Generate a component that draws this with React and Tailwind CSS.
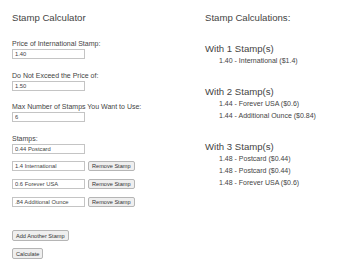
import React from 'react';

const stamps = ['1.4 International', '0.6 Forever USA', '.84 Additional Ounce'];

const results = [
  { count: 1, items: ['1.40 - International ($1.4)'] },
  { count: 2, items: ['1.44 - Forever USA ($0.6)', '1.44 - Additional Ounce ($0.84)'] },
  { count: 3, items: ['1.48 - Postcard ($0.44)', '1.48 - Postcard ($0.44)', '1.48 - Forever USA ($0.6)'] },
];

const inputCls =
  'block w-[73px] h-[10px] border border-[#c4c4c4] bg-white px-[2px] text-[5.8px] leading-[8px] text-[#444] outline-none';
const btnCls =
  'h-[10px] border border-[#b5b5b5] rounded-[2px] bg-[#efefef] px-[3px] text-[5.6px] leading-[8px] text-[#333] whitespace-nowrap';

const Field = ({ label, value }) => (
  <div className="mb-[11.5px]">
    <div className="h-[9px] text-[7px] leading-[9px]">{label}</div>
    <input className={`${inputCls} mt-[1px]`} defaultValue={value} />
  </div>
);

const App = () => {
  return (
    <div
      className="w-[340px] h-[273px] bg-white flex px-3 pt-3 text-[#444]"
      style={{ fontFamily: '"Liberation Sans", Arial, sans-serif' }}
    >
      {/* Left: calculator form */}
      <div className="w-[193px] shrink-0">
        <div className="h-[12px] text-[9.6px] leading-[12px] mb-[15px]">Stamp Calculator</div>

        <Field label="Price of International Stamp:" value="1.40" />
        <Field label="Do Not Exceed the Price of:" value="1.50" />
        <Field label="Max Number of Stamps You Want to Use:" value="6" />

        <div className="h-[9px] text-[7px] leading-[9px]">Stamps:</div>
        <input className={`${inputCls} mt-[1px]`} defaultValue="0.44 Postcard" />

        <div className="mt-[7.5px] flex flex-col gap-[8px]">
          {stamps.map((s) => (
            <div key={s} className="flex items-center gap-[3px]">
              <input className={inputCls} defaultValue={s} />
              <button className={btnCls}>Remove Stamp</button>
            </div>
          ))}
        </div>

        <button className={`${btnCls} block mt-[23px] h-[11px]`}>Add Another Stamp</button>
        <button className={`${btnCls} block mt-[7px] h-[11px]`}>Calculate</button>
      </div>

      {/* Right: results */}
      <div className="flex-1">
        <div className="h-[12px] text-[9.6px] leading-[12px] mb-[18.5px]">Stamp Calculations:</div>
        {results.map((r) => (
          <div key={r.count} className="mb-[19px]">
            <div className="h-[12px] text-[9.6px] leading-[12px]">With {r.count} Stamp(s)</div>
            <div className="pl-[14px]">
              {r.items.map((it, i) => (
                <div key={i} className="h-[12px] text-[7px] leading-[12px] whitespace-nowrap">
                  {it}
                </div>
              ))}
            </div>
          </div>
        ))}
      </div>
    </div>
  );
};

export default App;
